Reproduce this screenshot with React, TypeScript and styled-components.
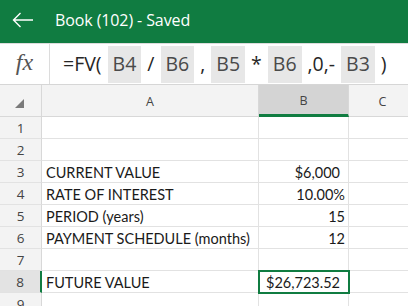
import styled, { createGlobalStyle } from 'styled-components';

const GlobalStyle = createGlobalStyle`
    html, body {
        margin: 0;
        padding: 0;
        background: #ffffff;
    }
    body {
        font-family: "Open Sans", "Noto Sans", sans-serif;
    }
`;

const GREEN = '#107c41';

type Token = { text: string; ref?: boolean };

const formula: Token[] = [
    { text: '=FV(' },
    { text: 'B4', ref: true },
    { text: '/' },
    { text: 'B6', ref: true },
    { text: ',' },
    { text: 'B5', ref: true },
    { text: '*' },
    { text: 'B6', ref: true },
    { text: ',0,-' },
    { text: 'B3', ref: true },
    { text: ')' },
];

type Row = {
    label: string;
    value: string;
    money?: boolean;
};

const rows: Row[] = [
    { label: '', value: '' },
    { label: '', value: '' },
    { label: 'CURRENT VALUE', value: '$6,000', money: true },
    { label: 'RATE OF INTEREST', value: '10.00%' },
    { label: 'PERIOD (years)', value: '15' },
    { label: 'PAYMENT SCHEDULE (months)', value: '12' },
    { label: '', value: '' },
    { label: 'FUTURE VALUE', value: '$26,723.52', money: true },
    { label: '', value: '' },
];

const SELECTED_ROW = 8;

export default function App() {
    return (
        <Screen>
            <GlobalStyle />
            <TitleBar>
                <BackButton aria-label="Back">
                    <svg width="22" height="16" viewBox="0 0 22 16" fill="none">
                        <path
                            d="M21 8H1.5M8.5 1L1.5 8L8.5 15"
                            stroke="#ffffff"
                            strokeWidth="1.4"
                        />
                    </svg>
                </BackButton>
                <Title>Book (102) - Saved</Title>
            </TitleBar>

            <FormulaBar>
                <FxBox>fx</FxBox>
                <Formula>
                    {formula.map((t, i) =>
                        t.ref ? (
                            <RefToken key={i}>{t.text}</RefToken>
                        ) : (
                            <OpToken key={i}>{t.text}</OpToken>
                        )
                    )}
                </Formula>
            </FormulaBar>

            <Sheet>
                <Corner>
                    <svg width="9" height="9" viewBox="0 0 9 9">
                        <polygon points="9,0 9,9 0,9" fill="#7a7a7a" />
                    </svg>
                </Corner>
                <ColHeader>A</ColHeader>
                <ColHeader $active>B</ColHeader>
                <ColHeader>C</ColHeader>

                {rows.map((r, i) => {
                    const n = i + 1;
                    const active = n === SELECTED_ROW;
                    return [
                        <RowHeader key={`h${n}`} $active={active}>
                            {n}
                        </RowHeader>,
                        <Cell key={`a${n}`}>{r.label}</Cell>,
                        <Cell
                            key={`b${n}`}
                            $align="right"
                            $money={r.money}
                            $selected={active}
                        >
                            {r.value}
                        </Cell>,
                        <Cell key={`c${n}`} />,
                    ];
                })}
            </Sheet>
        </Screen>
    );
}

const Screen = styled.div`
    width: 408px;
    height: 306px;
    overflow: hidden;
    background: #ffffff;
    display: flex;
    flex-direction: column;
`;

const TitleBar = styled.div`
    height: 43px;
    flex-shrink: 0;
    background: ${GREEN};
    display: flex;
    align-items: center;
    padding-left: 12px;
    gap: 21px;
    color: #ffffff;
`;

const BackButton = styled.div`
    display: flex;
    align-items: center;
    margin-top: -3px;
`;

const Title = styled.div`
    font-size: 16px;
    margin-top: -4px;
    letter-spacing: -0.1px;
`;

const FormulaBar = styled.div`
    height: 40px;
    flex-shrink: 0;
    display: flex;
    border-top: 1px solid #dcdcdc;
    border-bottom: 1px solid #d6d6d6;
`;

const FxBox = styled.div`
    width: 50px;
    flex-shrink: 0;
    border-right: 1px solid #dcdcdc;
    display: flex;
    align-items: center;
    justify-content: center;
    font-family: "Liberation Serif", "DejaVu Serif", serif;
    font-style: italic;
    font-size: 24px;
    color: #555555;
    padding-bottom: 4px;
    box-sizing: border-box;
`;

const Formula = styled.div`
    flex: 1;
    display: flex;
    align-items: stretch;
    gap: 4px;
    padding: 2px 0 1px 11px;
    font-size: 19.5px;
    color: #262626;
    white-space: nowrap;
`;

const OpToken = styled.span`
    display: flex;
    align-items: center;
    padding: 0 2px 3px;
`;

const RefToken = styled.span`
    display: flex;
    align-items: center;
    background: #e7e7e7;
    color: #4a4a4a;
    padding: 0 5px 3px;
`;

const Sheet = styled.div`
    display: grid;
    grid-template-columns: 42px 217px 90px 68px;
    grid-auto-rows: 22px;
    grid-template-rows: 32px;
    font-family: "Lato", sans-serif;
`;

const HeaderBase = styled.div`
    background: #f3f3f3;
    color: #444444;
    display: flex;
    align-items: center;
    justify-content: center;
    box-sizing: border-box;
    font-family: "Open Sans", "Noto Sans", sans-serif;
`;

const Corner = styled(HeaderBase)`
    justify-content: flex-end;
    align-items: flex-end;
    padding: 0 17px 8px 0;
    border-right: 1px solid #d8d8d8;
    border-bottom: 1px solid #d8d8d8;
`;

const ColHeader = styled(HeaderBase)<{ $active?: boolean }>`
    font-size: 12.5px;
    padding-top: 2px;
    background: ${(p) => (p.$active ? '#d4d4d4' : '#f3f3f3')};
    border-right: 1px solid #d8d8d8;
    border-bottom: ${(p) =>
        p.$active ? `3px solid ${GREEN}` : '1px solid #d8d8d8'};
`;

const RowHeader = styled(HeaderBase)<{ $active?: boolean }>`
    font-size: 13.5px;
    background: ${(p) => (p.$active ? '#e3e3e3' : '#f3f3f3')};
    border-bottom: 1px solid #e2e2e2;
    border-right: ${(p) =>
        p.$active ? `2px solid ${GREEN}` : '1px solid #d8d8d8'};
`;

const Cell = styled.div<{
    $align?: 'left' | 'right';
    $money?: boolean;
    $selected?: boolean;
}>`
    box-sizing: border-box;
    display: flex;
    align-items: center;
    justify-content: ${(p) => (p.$align === 'right' ? 'flex-end' : 'flex-start')};
    padding: 1px ${(p) => (p.$money ? '8px' : '3px')} 0 4px;
    font-size: 14.5px;
    color: #1a1a1a;
    white-space: nowrap;
    border-right: 1px solid #e2e2e2;
    border-bottom: 1px solid #e2e2e2;
    ${(p) =>
        p.$selected &&
        `
        outline: 2px solid ${GREEN};
        outline-offset: -1px;
        position: relative;
        z-index: 1;
    `}
`;
